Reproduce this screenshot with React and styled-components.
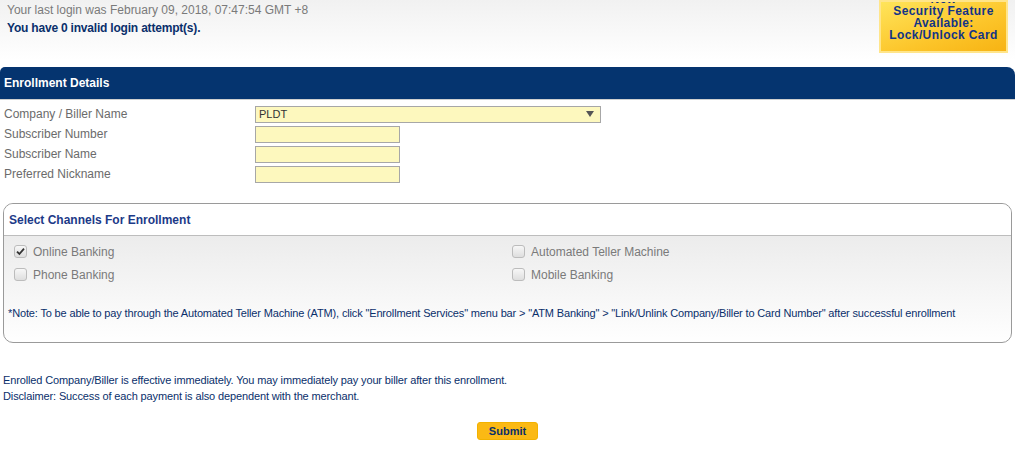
import React from "react";
import styled, { createGlobalStyle } from "styled-components";

const GlobalStyle = createGlobalStyle`
  body {
    margin: 0;
    background: #ffffff;
    font-family: "Liberation Sans", Arial, sans-serif;
  }
`;

// 전체 페이지
const Page = styled.div`
  width: 1015px;
`;

// 상단 로그인 정보 + 배너
const TopBar = styled.div`
  display: flex;
  justify-content: space-between;
  height: 67px;
  background: linear-gradient(#f1f1f1, #ffffff 60px);
`;

const LoginInfo = styled.div`
  padding: 1px 0 0 7px;
  font-size: 12px;
  line-height: 18px;
`;

const LastLogin = styled.div`
  color: #7a7a7a;
`;

const Attempts = styled.div`
  color: #0a2f6b;
  font-weight: bold;
  letter-spacing: -0.2px;
`;

// 배너: 첫 줄("New")은 위쪽이 잘려 보임
const Promo = styled.div`
  width: 125px;
  height: 39px;
  margin-right: 7px;
  border: 2px solid #ffe58a;
  background: linear-gradient(160deg, #ffe45a, #fcc52a 60%, #f7b313);
  display: flex;
  flex-direction: column;
  justify-content: flex-end;
  align-items: center;
  overflow: hidden;
  padding-bottom: 10px;
  box-sizing: content-box;
  color: #123487;
  font-size: 12px;
  letter-spacing: 0.4px;
  font-weight: bold;
  line-height: 12px;
  text-align: center;
  white-space: nowrap;
`;

// 파란 제목 바
const SectionBar = styled.div`
  height: 32px;
  display: flex;
  align-items: center;
  padding-left: 4px;
  background: #05346f;
  border-radius: 5px 8px 0 0;
  border-bottom: 1px solid #cfcfcf;
  color: #ffffff;
  font-size: 12px;
  font-weight: bold;
`;

const FormGrid = styled.div`
  display: grid;
  grid-template-columns: 251px 1fr;
  grid-auto-rows: 20px;
  margin-top: 4px;
  padding-left: 4px;
  align-items: center;
`;

const Label = styled.div`
  color: #6b6b6b;
  font-size: 12px;
`;

const FieldBase = styled.div`
  box-sizing: border-box;
  height: 17px;
  background: #fdf8be;
  border: 1px solid #a7a7a7;
`;

const SelectBox = styled(FieldBase)`
  width: 346px;
  display: flex;
  align-items: center;
  justify-content: space-between;
  padding: 0 6px 0 3px;
  color: #333333;
  font-size: 11px;
`;

const Arrow = styled.span`
  width: 0;
  height: 0;
  border-left: 4px solid transparent;
  border-right: 4px solid transparent;
  border-top: 6px solid #555555;
`;

const TextBox = styled(FieldBase)`
  width: 145px;
`;

// 채널 선택 박스
const ChannelBox = styled.div`
  margin: 19px 0 0 3px;
  width: 1009px;
  box-sizing: border-box;
  border: 1px solid #9a9a9a;
  border-radius: 10px;
  overflow: hidden;
  background: linear-gradient(#ececec 33px, #ffffff 140px);
`;

const ChannelTitle = styled.div`
  height: 31px;
  display: flex;
  align-items: center;
  padding-left: 5px;
  background: #ffffff;
  border-bottom: 1px solid #bdbdbd;
  color: #1c3a88;
  font-size: 12px;
  font-weight: bold;
`;

const ChannelGrid = styled.div`
  display: grid;
  grid-template-columns: 498px 1fr;
  grid-auto-rows: 23px;
  padding: 4px 0 0 10px;
`;

const Channel = styled.label`
  display: flex;
  align-items: center;
  gap: 6px;
  color: #7a7a7a;
  font-size: 12px;
`;

const Box = styled.span`
  width: 13px;
  height: 13px;
  box-sizing: border-box;
  border: 1px solid #bcbcbc;
  border-radius: 3px;
  background: linear-gradient(#f7f7f7, #dedede);
  display: flex;
  align-items: center;
  justify-content: center;
`;

const Note = styled.div`
  margin: 20px 0 0 4px;
  padding-bottom: 22px;
  color: #0a2f6b;
  font-size: 11px;
  line-height: 14px;
  letter-spacing: -0.15px;
`;

const Footer = styled.div`
  margin-top: 29px;
  padding-left: 3px;
  color: #0a2f6b;
  font-size: 11px;
  line-height: 16px;
  letter-spacing: -0.13px;
`;

const Actions = styled.div`
  display: flex;
  justify-content: center;
  margin-top: 18px;
`;

const SubmitButton = styled.button`
  width: 61px;
  height: 18px;
  padding: 0;
  border: 1px solid #f3b200;
  border-radius: 3px;
  background: #fbb914;
  color: #0a2f6b;
  font-family: "Liberation Sans", Arial, sans-serif;
  font-size: 11px;
  font-weight: bold;
  cursor: pointer;
`;

const CheckBox = ({ checked }) => (
  <Box>
    {checked && (
      <svg width="9" height="9" viewBox="0 0 9 9">
        <path d="M1 4.6 L3.4 7 L8 1.6" fill="none" stroke="#333" strokeWidth="1.8" />
      </svg>
    )}
  </Box>
);

const fields = ["Subscriber Number", "Subscriber Name", "Preferred Nickname"];

const channels = [
  { name: "Online Banking", checked: true },
  { name: "Automated Teller Machine" },
  { name: "Phone Banking" },
  { name: "Mobile Banking" },
];

const App = () => {
  return (
    <>
      <GlobalStyle />
      <Page>
        <TopBar>
          <LoginInfo>
            <LastLogin>Your last login was February 09, 2018, 07:47:54 GMT +8</LastLogin>
            <Attempts>You have 0 invalid login attempt(s).</Attempts>
          </LoginInfo>
          <Promo>
            <div>New</div>
            <div>Security Feature</div>
            <div>Available:</div>
            <div>Lock/Unlock Card</div>
          </Promo>
        </TopBar>

        <SectionBar>Enrollment Details</SectionBar>
        <FormGrid>
          <Label>Company / Biller Name</Label>
          <SelectBox>
            <span>PLDT</span>
            <Arrow />
          </SelectBox>
          {fields.map((f) => (
            <React.Fragment key={f}>
              <Label>{f}</Label>
              <TextBox />
            </React.Fragment>
          ))}
        </FormGrid>

        <ChannelBox>
          <ChannelTitle>Select Channels For Enrollment</ChannelTitle>
          <ChannelGrid>
            {channels.map((c) => (
              <Channel key={c.name}>
                <CheckBox checked={c.checked} />
                {c.name}
              </Channel>
            ))}
          </ChannelGrid>
          <Note>
            *Note: To be able to pay through the Automated Teller Machine (ATM), click "Enrollment Services" menu bar &gt; "ATM Banking" &gt; "Link/Unlink Company/Biller to Card Number" after successful enrollment
          </Note>
        </ChannelBox>

        <Footer>
          <div>Enrolled Company/Biller is effective immediately. You may immediately pay your biller after this enrollment.</div>
          <div>Disclaimer: Success of each payment is also dependent with the merchant.</div>
        </Footer>
        <Actions>
          <SubmitButton>Submit</SubmitButton>
        </Actions>
      </Page>
    </>
  );
};

export default App;
